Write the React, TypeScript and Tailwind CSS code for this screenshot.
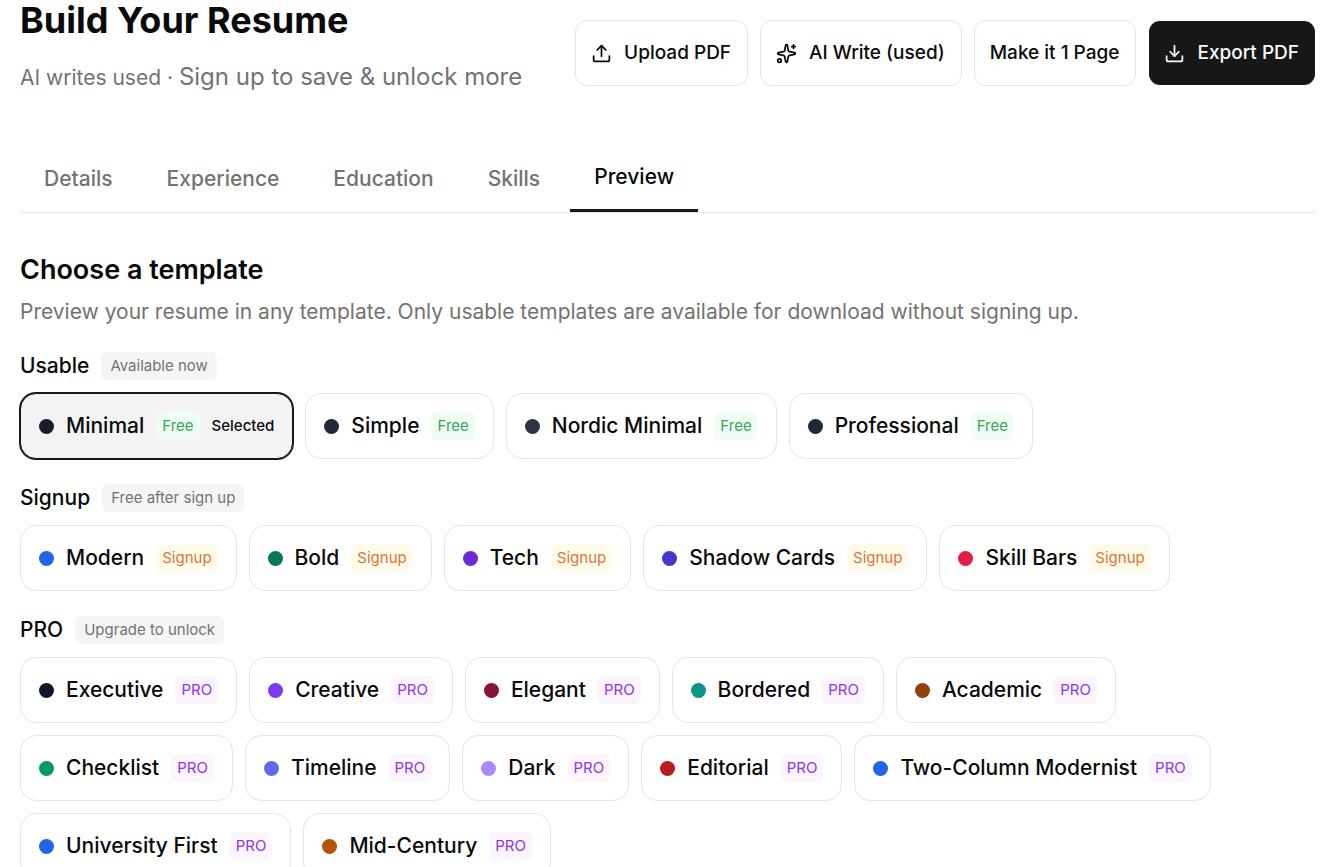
import { Download, Sparkles, Upload } from "lucide-react";

type Tier = "Free" | "Signup" | "PRO";
type Template = { name: string; dot: string };
type Group = { title: string; note: string; tier: Tier; items: Template[] };

const tierStyle: Record<Tier, string> = {
  Free: "bg-[#f0fdf4] text-[#38a55c]",
  Signup: "bg-[#fffbeb] text-[#dd7536]",
  PRO: "bg-[#faf5ff] text-[#9333ea]",
};

const groups: Group[] = [
  {
    title: "Usable",
    note: "Available now",
    tier: "Free",
    items: [
      { name: "Minimal", dot: "bg-[#1a1a2e]" },
      { name: "Simple", dot: "bg-[#1f2937]" },
      { name: "Nordic Minimal", dot: "bg-[#2d3340]" },
      { name: "Professional", dot: "bg-[#1e293b]" },
    ],
  },
  {
    title: "Signup",
    note: "Free after sign up",
    tier: "Signup",
    items: [
      { name: "Modern", dot: "bg-[#2563eb]" },
      { name: "Bold", dot: "bg-[#047857]" },
      { name: "Tech", dot: "bg-[#6d28d9]" },
      { name: "Shadow Cards", dot: "bg-[#4338ca]" },
      { name: "Skill Bars", dot: "bg-[#e11d48]" },
    ],
  },
  {
    title: "PRO",
    note: "Upgrade to unlock",
    tier: "PRO",
    items: [
      { name: "Executive", dot: "bg-[#0f172a]" },
      { name: "Creative", dot: "bg-[#7c3aed]" },
      { name: "Elegant", dot: "bg-[#881337]" },
      { name: "Bordered", dot: "bg-[#0d9488]" },
      { name: "Academic", dot: "bg-[#92400e]" },
      { name: "Checklist", dot: "bg-[#059669]" },
      { name: "Timeline", dot: "bg-[#6366f1]" },
      { name: "Dark", dot: "bg-[#a78bfa]" },
      { name: "Editorial", dot: "bg-[#b91c1c]" },
      { name: "Two-Column Modernist", dot: "bg-[#2563eb]" },
      { name: "University First", dot: "bg-[#2563eb]" },
      { name: "Mid-Century", dot: "bg-[#b45309]" },
    ],
  },
];

const tabs = ["Details", "Experience", "Education", "Skills", "Preview"];

const buttonBase =
  "flex h-[66px] items-center gap-3 rounded-xl border pr-4 pl-[15px] text-[19px] leading-[30px] font-medium whitespace-nowrap";
const outlineButton = `${buttonBase} border-[#e5e5e5] bg-white`;
const solidButton = `${buttonBase} border-transparent bg-[#171717] bg-clip-padding text-[#fafafa]`;

function Chip({ item, tier, selected }: { item: Template; tier: Tier; selected: boolean }) {
  return (
    <button
      type="button"
      aria-pressed={selected}
      className={
        selected
          ? "flex h-[66px] items-center gap-3 rounded-2xl border border-[#171717] bg-[#f3f3f3] px-[18px] ring-1 ring-[#171717]"
          : "flex h-[66px] items-center gap-3 rounded-2xl border border-[#e5e5e5] bg-white px-[18px]"
      }
    >
      <span className={`size-[15px] rounded-full ${item.dot}`} />
      <span className="text-[21px] font-medium">{item.name}</span>
      <span className={`rounded-md px-1.5 py-[3px] text-[15px] leading-[22px] ${tierStyle[tier]}`}>{tier}</span>
      {selected && <span className="text-[15px] font-medium">Selected</span>}
    </button>
  );
}

export default function App() {
  return (
    <main className="bg-white px-5 pr-4 font-['Inter',sans-serif] text-[#0a0a0a]">
      <header className="flex items-start justify-between gap-4">
        <div>
          <h1 className="text-[36px] leading-10 font-bold">Build Your Resume</h1>
          <p className="mt-[19px] text-[21px] leading-9 text-[#737373]">
            AI writes used ·{" "}
            <a href="#signup" className="text-[24px]">
              Sign up to save &amp; unlock more
            </a>
          </p>
        </div>
        <div className="flex items-center gap-3 pt-5">
          <button type="button" className={outlineButton}>
            <Upload className="size-[21px]" />
            Upload PDF
          </button>
          <button type="button" className={outlineButton}>
            <Sparkles className="size-[21px]" />
            AI Write (used)
          </button>
          <button type="button" className={outlineButton}>
            Make it 1 Page
          </button>
          <button type="button" className={solidButton}>
            <Download className="size-[21px]" />
            Export PDF
          </button>
        </div>
      </header>

      <nav className="mt-[49px] flex gap-1.5 border-b border-[#e5e5e5]">
        {tabs.map((tab) => (
          <button
            key={tab}
            type="button"
            className={
              tab === "Preview"
                ? "h-[67px] border-b-[3px] border-[#171717] px-6 text-[21px] font-medium"
                : "h-[67px] px-6 text-[21px] font-medium text-[#737373]"
            }
          >
            {tab}
          </button>
        ))}
      </nav>

      <section className="mt-9">
        <h2 className="text-[27px] leading-[42px] font-semibold">Choose a template</h2>
        <p className="mt-1.5 text-[21px] leading-[30px] text-[#737373]">
          Preview your resume in any template. Only usable templates are available for download without signing up.
        </p>
        <div className="mt-6 flex flex-col gap-6">
          {groups.map((group) => (
            <section key={group.title} className="flex flex-col gap-3">
              <div className="flex items-center gap-3">
                <h3 className="text-[21px] leading-[30px] font-medium">{group.title}</h3>
                <span className="rounded-md bg-[#f5f5f5] px-[9px] py-[3px] text-[15px] leading-[22px] text-[#737373]">
                  {group.note}
                </span>
              </div>
              <div className="flex flex-wrap gap-3">
                {group.items.map((item) => (
                  <Chip key={item.name} item={item} tier={group.tier} selected={item.name === "Minimal"} />
                ))}
              </div>
            </section>
          ))}
        </div>
      </section>
    </main>
  );
}
